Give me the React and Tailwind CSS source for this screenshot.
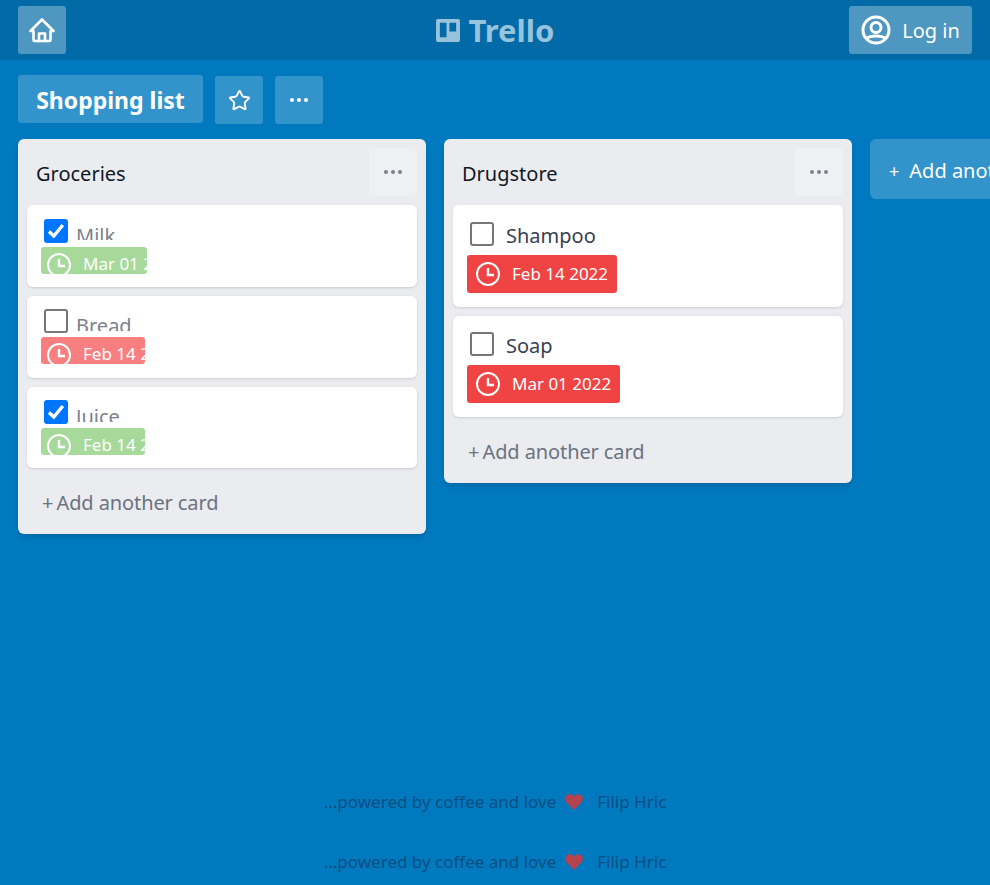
import React from "react";
import { Star } from "lucide-react";

const font = { fontFamily: '"Noto Sans", "Open Sans", sans-serif' };

function HomeIcon() {
  return (
    <svg width="26" height="26" viewBox="0 0 26 26" fill="none" stroke="white" strokeWidth="2.6" strokeLinejoin="round" strokeLinecap="round">
      <path d="M1.5 14 L13 2.5 L24.5 14 H21.5 V23 C21.5 23.6 21 24 20.5 24 H5.5 C5 24 4.5 23.6 4.5 23 V14 Z" />
      <path d="M10 24 V16.5 H16 V24" />
    </svg>
  );
}

function UserIcon() {
  return (
    <svg width="30" height="30" viewBox="0 0 30 30" fill="none" stroke="white" strokeWidth="3">
      <circle cx="15" cy="15" r="13" />
      <circle cx="15" cy="12.5" r="5" />
      <path d="M5.5 24 C8 20 22 20 24.5 24" />
    </svg>
  );
}

function ClockIcon() {
  return (
    <svg width="24" height="24" viewBox="0 0 24 24" fill="none" stroke="white" strokeWidth="2" className="shrink-0">
      <circle cx="12" cy="12" r="11" />
      <path d="M12 6 V13 H18" strokeWidth="2.4" />
    </svg>
  );
}

function Dots({ className }) {
  return (
    <svg width="20" height="6" viewBox="0 0 20 6" fill="currentColor" className={className}>
      <circle cx="3" cy="3" r="2" />
      <circle cx="10" cy="3" r="2" />
      <circle cx="17" cy="3" r="2" />
    </svg>
  );
}

function Checkbox({ checked }) {
  if (checked) {
    return (
      <span className="w-6 h-6 shrink-0 rounded-[3px] bg-[#0075ff] flex items-center justify-center">
        <svg width="18" height="16" viewBox="0 0 18 16" fill="none" stroke="white" strokeWidth="3.4">
          <path d="M2 8.5 L6.8 13 L15.8 2" />
        </svg>
      </span>
    );
  }
  return <span className="w-6 h-6 shrink-0 rounded-[3px] border-2 border-[#767676] bg-white" />;
}

// card once it has finished opening
function FullCard({ title, date }) {
  return (
    <div className="h-[101.5px] bg-white rounded-md shadow-sm px-[14px] pt-[16.5px] overflow-hidden">
      <div className="h-[33px] flex items-start gap-3 pl-[3px] text-[#374151] text-xl leading-[27px]">
        <Checkbox />
        <span>{title}</span>
      </div>
      <div className="inline-flex items-center h-[38px] rounded-[3px] bg-[#f04444] text-white px-[9px] gap-3 text-[17px]">
        <ClockIcon />
        <span>{date}</span>
      </div>
    </div>
  );
}

// card still squeezed, title and date are cut by their boxes
function SmallCard({ title, date, checked, tagClass, pillW }) {
  return (
    <div className="h-[81.75px] bg-white rounded-md shadow-sm px-[14px] pt-[13.5px] overflow-hidden">
      <div className="h-7 flex items-start gap-2 pl-[3px] text-[#7b818c] text-xl">
        <Checkbox checked={checked} />
        <span className="block h-[21.5px] overflow-hidden leading-[34px]">{title}</span>
      </div>
      <div className={`${pillW} ${tagClass} h-[27px] rounded-[3px] overflow-hidden text-white text-[17px]`}>
        <div className="flex items-start gap-3 pl-[6px] pt-[6px] whitespace-nowrap leading-[22px]">
          <ClockIcon />
          <span>{date}</span>
        </div>
      </div>
    </div>
  );
}

function ListHeader({ title }) {
  return (
    <div className="flex items-start justify-between pl-[18px] pr-[9px] pt-[9px] h-[66px]">
      <h2 className="h-12 flex items-center pt-[4px] text-xl text-[#111827]">{title}</h2>
      <button className="w-12 h-12 rounded bg-[#eff0f3] text-[#7c828c] flex items-center justify-center">
        <Dots />
      </button>
    </div>
  );
}

function AddCard() {
  return (
    <div className="flex items-center text-xl text-[#6b7280] pl-6 pt-1 h-[66px]">
      <span className="mr-[3px] text-xl">+</span>
      <span className="tracking-[-0.1px]">Add another card</span>
    </div>
  );
}

function Footer() {
  return (
    <div className="h-[60px] pt-[14px] flex items-center justify-center text-[17px] text-[#0b4f82]">
      <span>...powered by coffee and love</span>
      <svg width="18" height="16" viewBox="0 0 18 16" fill="#b5424f" className="ml-[9px] mr-[14px]">
        <path d="M9 16 L1.4 8.3 C-0.6 6 -0.2 2.6 2 1 C4.4 -0.6 7.4 0.1 9 2.4 C10.6 0.1 13.6 -0.6 16 1 C18.2 2.6 18.6 6 16.6 8.3 Z" />
      </svg>
      <span>Filip Hric</span>
    </div>
  );
}

export default function App() {
  return (
    <div style={font} className="h-[885px] w-full overflow-hidden bg-[#0079bf] flex flex-col">
      {/* top bar */}
      <header className="h-[60px] shrink-0 bg-[#026aa7] grid grid-cols-[1fr_auto_1fr] items-center px-[18px]">
        <button className="w-12 h-12 rounded-[3px] bg-white/30 flex items-center justify-center">
          <HomeIcon />
        </button>
        <div className="flex items-center gap-[9px] text-[#98c3dc] font-bold text-[31px] leading-none">
          <svg width="24" height="23" viewBox="0 0 25 24" fill="currentColor">
            <path fillRule="evenodd" d="M2 0 H23 A2 2 0 0 1 25 2 V22 A2 2 0 0 1 23 24 H2 A2 2 0 0 1 0 22 V2 A2 2 0 0 1 2 0 Z M4 4 V19 H11 V4 Z M14 4 V13 H21 V4 Z" />
          </svg>
          <span>Trello</span>
        </div>
        <button className="h-12 w-[123px] justify-self-end rounded-[3px] bg-white/30 text-white text-xl flex items-center justify-center gap-[11px]">
          <UserIcon />
          <span className="pt-[2px]">Log in</span>
        </button>
      </header>

      {/* board title row */}
      <div className="flex items-start pl-[18px] pt-[15px]">
        <div className="h-12 w-[185px] pt-[2px] rounded-[3px] bg-white/20 text-white text-[23px] font-bold flex items-center justify-center">
          Shopping list
        </div>
        <button className="h-12 w-12 mt-px ml-3 rounded-[3px] bg-white/20 text-white flex items-center justify-center">
          <Star size={23} strokeWidth={2} />
        </button>
        <button className="h-12 w-12 mt-px ml-3 rounded-[3px] bg-white/20 text-white flex items-center justify-center">
          <Dots />
        </button>
      </div>

      {/* lists */}
      <div className="flex items-start gap-[18px] pl-[18px] pt-[15px]">
        <section className="w-[408px] shrink-0 bg-[#ebecf0] rounded-md shadow-md">
          <ListHeader title="Groceries" />
          <div className="flex flex-col gap-[9px] px-[9px]">
            <SmallCard title="Milk" date="Mar 01 2022" checked tagClass="bg-[#a7d99b]" pillW="w-[106px]" />
            <SmallCard title="Bread" date="Feb 14 2022" tagClass="bg-[#f77f7f]" pillW="w-[104px]" />
            <SmallCard title="Juice" date="Feb 14 2022" checked tagClass="bg-[#a7d99b]" pillW="w-[104px]" />
          </div>
          <AddCard />
        </section>

        <section className="w-[408px] shrink-0 bg-[#ebecf0] rounded-md shadow-md">
          <ListHeader title="Drugstore" />
          <div className="flex flex-col gap-[9px] px-[9px]">
            <FullCard title="Shampoo" date="Feb 14 2022" />
            <FullCard title="Soap" date="Mar 01 2022" />
          </div>
          <AddCard />
        </section>

        <div className="w-[300px] h-[60px] pt-[4px] shrink-0 rounded-md bg-white/20 text-white text-xl flex items-center pl-[19px]">
          <span className="mr-[10px] text-lg">+</span>
          <span>Add another list</span>
        </div>
      </div>

      <div className="mt-auto">
        <Footer />
        <Footer />
      </div>
    </div>
  );
}
